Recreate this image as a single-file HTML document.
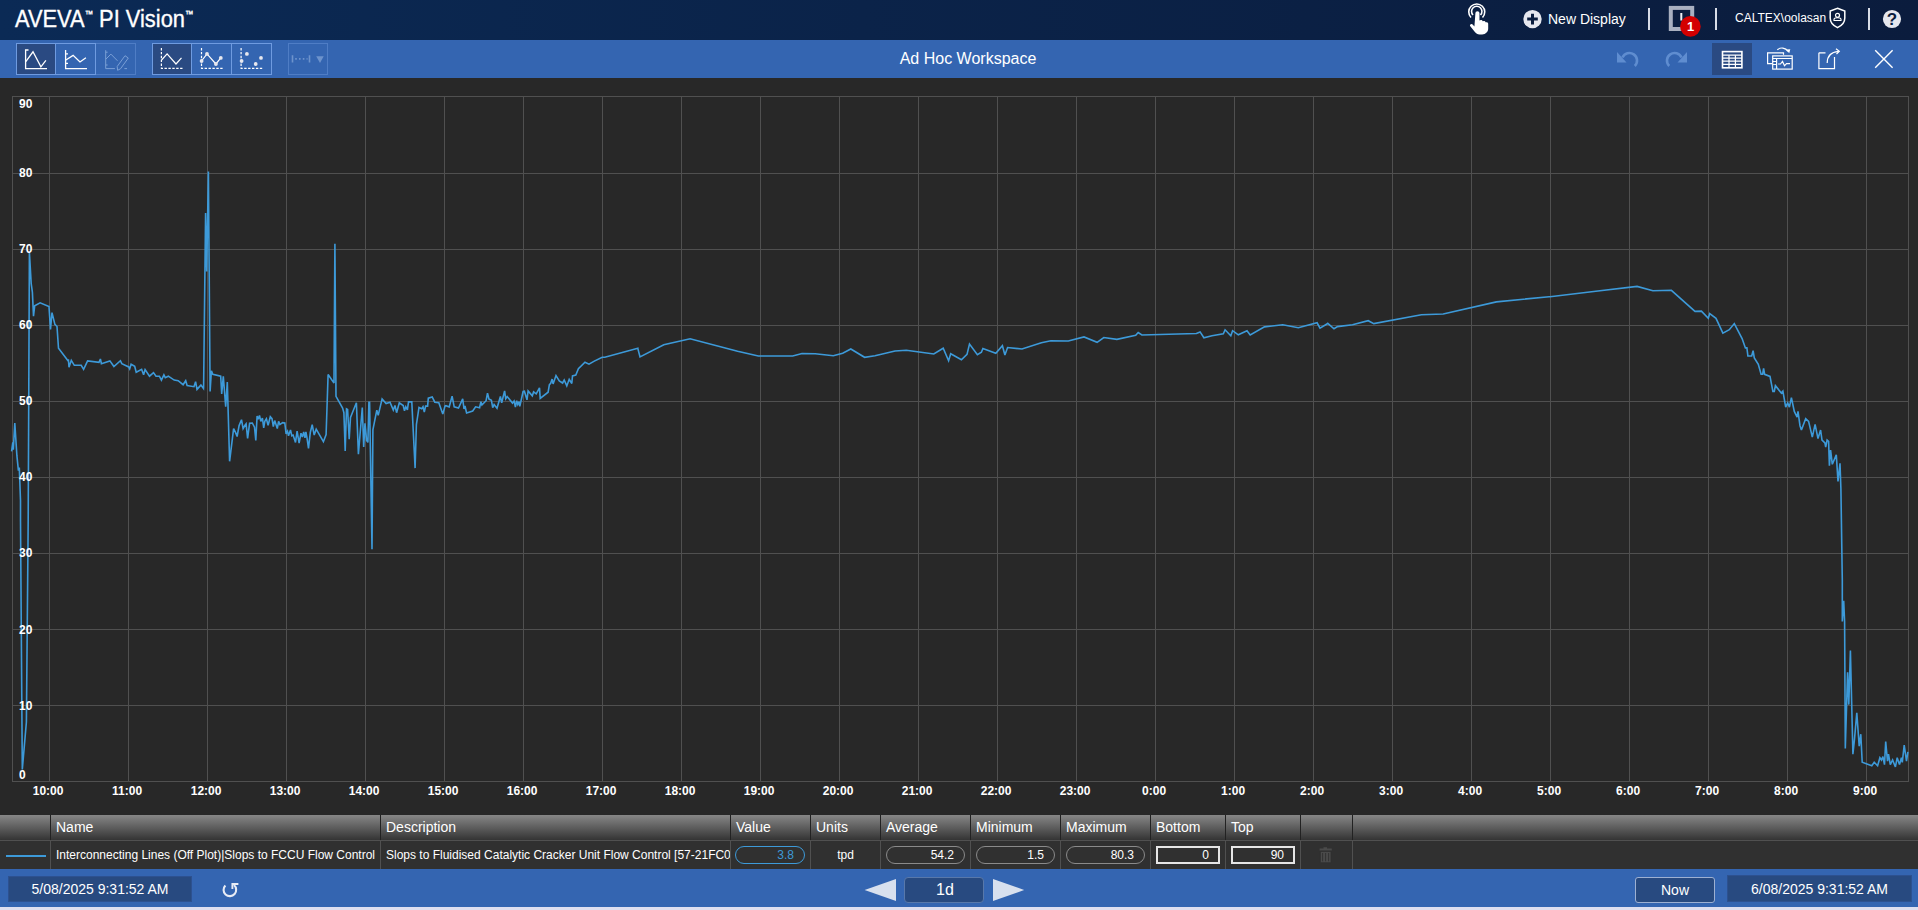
<!DOCTYPE html>
<html><head><meta charset="utf-8">
<style>
*{margin:0;padding:0;box-sizing:border-box}
html,body{width:1918px;height:910px;overflow:hidden;background:#dedff0;font-family:"Liberation Sans",sans-serif;color:#fff}
.a{position:absolute}
#hdr{left:0;top:0;width:1918px;height:40px;background:linear-gradient(90deg,#0b2a55 0%,#0b2349 45%,#0b1c3d 100%)}
#tb{left:0;top:40px;width:1918px;height:38px;background:#3465b1}
#chart{left:0;top:78px;width:1918px;height:737px;background:#282828}
#th{left:0;top:815px;width:1918px;height:25px;background:linear-gradient(#878787,#343434)}
#tr{left:0;top:840px;width:1918px;height:29px;background:#303030;border-top:1px solid #505050}
#bb{left:0;top:869px;width:1918px;height:38px;background:#3465b1}
.btn{position:absolute;top:43px;height:32px;border:1px solid #6f9be0}
.btn.on{background:#2a4a82}
.hc{position:absolute;top:815px;height:25px;font-size:14px;line-height:25px;padding-left:5px;white-space:nowrap}
.sep{position:absolute;width:1px}
.rc{position:absolute;top:841px;height:28px;font-size:12px;line-height:28px;white-space:nowrap;overflow:hidden}
.pill{position:absolute;top:846px;height:18px;border:1px solid #8a8a8a;border-radius:9px;font-size:12px;line-height:16px;text-align:right;padding-right:10px}
.box{position:absolute;top:846px;height:18px;border:2px solid #e6e6e6;font-size:12px;line-height:14px;text-align:right;padding-right:9px}
.yl{position:absolute;left:19px;font-size:12px;font-weight:bold;line-height:14px}
.xl{position:absolute;top:784px;font-size:12px;font-weight:bold;line-height:14px;width:60px;text-align:center}
svg{overflow:visible}
</style></head><body>
<div id="hdr" class="a"></div>
<div class="a" style="left:15px;top:6px;font-size:23.5px;line-height:26px;white-space:nowrap;transform:scaleX(0.93);transform-origin:0 0;-webkit-text-stroke:0.35px #fff">AVEVA<span style="font-size:9px;position:relative;top:-10px;margin-left:0px">™</span> PI Vision<span style="font-size:9px;position:relative;top:-10px;margin-left:0px">™</span></div>

<!-- header right -->
<svg class="a" style="left:1460px;top:0" width="40" height="40" viewBox="0 0 40 40">
  <path d="M11 17.5 A8 8 0 1 1 22.5 17.5" fill="none" stroke="#fff" stroke-width="1.6"/>
  <path d="M13 15 A5.2 5.2 0 1 1 20.5 15" fill="none" stroke="#fff" stroke-width="1.6"/>
  <path transform="translate(9.6 0) scale(1.12 1.02) translate(-9.6 0)" d="M14.8 12.8 a1.8 1.8 0 0 1 3.6 0 V20 l1.2 -0.3 c1.2 0 1.6 0.6 1.7 1.2 l1-0.2 c1 0 1.5 0.6 1.5 1.2 l0.8-0.1 c1 0 1.6 0.7 1.6 1.5 V28 c0 3 -2 5.8 -5.5 5.8 h-2.2 c-2 0 -3 -1 -4 -2.2 l-4.3 -5.8 c-0.6 -0.9 -0.2 -1.9 0.6 -2.1 c0.7 -0.2 1.4 0.1 1.9 0.7 l1.2 1.5 Z" fill="#fff"/>
</svg>
<svg class="a" style="left:1523px;top:10px" width="20" height="20" viewBox="0 0 20 20">
  <circle cx="9.5" cy="9.1" r="9.2" fill="#e6e7ee"/>
  <path d="M9.5 3.8 V14.4 M4.2 9.1 H14.8" stroke="#0b1d3e" stroke-width="3"/>
</svg>
<div class="a" style="left:1548px;top:10px;font-size:14px;line-height:18px">New Display</div>
<div class="a" style="left:1648px;top:8px;width:1.5px;height:22px;background:#d8dce6"></div>
<svg class="a" style="left:1666px;top:4px" width="40" height="36" viewBox="0 0 40 36">
  <rect x="4.8" y="3.9" width="21.4" height="21.1" fill="#0b1d3e" stroke="#a9b0c0" stroke-width="4"/>
  <path d="M12.5 27 l2 -2.2 h-4 z" fill="#a9b0c0"/>
  <rect x="14.3" y="9" width="2" height="7.5" fill="#eef0f6"/>
  <circle cx="24.4" cy="22.4" r="10.3" fill="#d40000"/>
  <text x="24.6" y="27" text-anchor="middle" font-family="Liberation Sans" font-weight="bold" font-size="13" fill="#fff">1</text>
</svg>
<div class="a" style="left:1715px;top:8px;width:1.5px;height:22px;background:#d8dce6"></div>
<div class="a" style="left:1735px;top:11px;font-size:12px;line-height:15px">CALTEX\oolasan</div>
<svg class="a" style="left:1829px;top:7px" width="18" height="22" viewBox="0 0 18 22">
  <path d="M8.5 1.2 L15.8 4 V11 C15.8 15.5 12.5 18.8 8.5 20.6 C4.5 18.8 1.2 15.5 1.2 11 V4 Z" fill="none" stroke="#fff" stroke-width="1.5"/>
  <circle cx="8.5" cy="8.3" r="2" fill="none" stroke="#fff" stroke-width="1.2"/>
  <path d="M5 13.5 H12 V12.3 C12 11.3 11 10.8 8.5 10.8 C6 10.8 5 11.3 5 12.3 Z" fill="none" stroke="#fff" stroke-width="1.1"/>
</svg>
<div class="a" style="left:1868px;top:8px;width:1.5px;height:22px;background:#d8dce6"></div>
<svg class="a" style="left:1882px;top:9px" width="20" height="20" viewBox="0 0 20 20">
  <circle cx="10" cy="10" r="9.1" fill="#e6e7ee"/>
  <text x="10" y="16" text-anchor="middle" font-family="Liberation Sans" font-weight="bold" font-size="17" fill="#0b1d3e">?</text>
</svg>

<div id="tb" class="a"></div>
<div class="btn on" style="left:16px;width:40px"></div>
<div class="btn" style="left:55px;width:41px"></div>
<div class="btn" style="left:95px;width:41px;border-color:#4f7dc5"></div>
<div class="btn" style="left:55px;width:41px"></div>
<div class="btn on" style="left:152px;width:40px"></div>
<div class="btn" style="left:191px;width:41px"></div>
<div class="btn" style="left:231px;width:41px"></div>
<div class="btn" style="left:288px;width:40px;border-color:#4f7dc5"></div>
<svg class="a" style="left:0;top:40px" width="340" height="38" viewBox="0 40 340 38">
  <g fill="none" stroke="#fff" stroke-width="1.3">
    <path d="M28.5 50 H25.6 V68.6 H47"/>
    <path d="M25.8 61.7 L33 51.8 L40.9 66.9 L45.9 60.4"/>
    <path d="M65.6 50 V68.6 H87 M65.6 53.8 H68 M65.6 63.3 H68"/>
    <path d="M65.9 60 L73.1 55.4 L80 62 L85.9 57.7"/>
  </g>
  <g fill="none" stroke="#7a9fd6" stroke-width="1">
    <path d="M105.7 50.2 V68.6 H114.9 M124.4 68.6 H127 M105.7 52.2 H107.6 M105.7 65 H107.6"/>
    <path d="M106 59 L110.9 54.1 L117.5 60.8"/>
    <path d="M117.2 66.5 L125 55.7 L128.3 58 L120.5 68.8 L117.6 70.3 Z"/>
  </g>
  <g fill="none" stroke="#fff" stroke-width="1.2" stroke-dasharray="2.4 1.5">
    <path d="M161.4 48 V68.3 H183.5"/>
    <path d="M201.5 48 V68.3 H223.5"/>
    <path d="M241.1 48 V68.3 H263"/>
  </g>
  <g fill="none" stroke="#fff" stroke-width="1.2">
    <path d="M161.6 60 L167.1 53.9 L176 64 L181.5 57.9"/>
    <path d="M201.5 61 L207 53.9 L215.9 64 L220.8 57.9"/>
  </g>
  <g fill="#e8e8ee">
    <circle cx="201.6" cy="61" r="1.9"/><circle cx="207" cy="53.9" r="1.9"/><circle cx="215.9" cy="64" r="1.9"/><circle cx="220.8" cy="57.9" r="1.9"/>
    <circle cx="241.6" cy="61" r="1.9"/><circle cx="246.9" cy="53.9" r="1.9"/><circle cx="255.7" cy="64" r="1.9"/><circle cx="261" cy="57.9" r="1.9"/>
  </g>
  <g fill="none" stroke="#6d93cc" stroke-width="1.6">
    <path d="M292.5 55.3 V62.6 M309.5 55.3 V62.6"/>
    <path d="M295.2 58.9 H307.5" stroke-dasharray="1.6 2.2"/>
  </g>
  <path d="M316.2 56.3 H323.7 L320 62.9 Z" fill="#6d93cc"/>
</svg>
<div class="a" style="left:0;top:49px;width:1936px;text-align:center;font-size:16px;line-height:20px">Ad Hoc Workspace</div>
<div class="a" style="left:1712px;top:43px;width:40px;height:32px;background:#2a4a82"></div>
<svg class="a" style="left:1600px;top:40px" width="318" height="38" viewBox="1600 40 318 38">
  <g fill="none" stroke="#5f8dd0" stroke-width="2.6">
    <path d="M1622.5 57.5 A7.6 7.6 0 1 1 1634.8 66"/>
    <path d="M1681.5 57.5 A7.6 7.6 0 1 0 1669.2 66"/>
  </g>
  <path d="M1617 52 V62.5 H1626.5 Z" fill="#5f8dd0"/>
  <path d="M1687 52 V62.5 H1677.5 Z" fill="#5f8dd0"/>
  <rect x="1722.5" y="51.6" width="19.4" height="16.2" fill="none" stroke="#fff" stroke-width="1.6"/>
  <path d="M1722.5 55.2 H1742 M1722.5 58.2 H1742 M1722.5 61.2 H1742 M1722.5 64.4 H1742" stroke="#fff" stroke-width="1.2"/>
  <path d="M1729 55.2 V68 M1735.4 55.2 V68" stroke="#fff" stroke-width="1.2"/>
  <g fill="none" stroke="#fff" stroke-width="1.2">
    <path d="M1783.5 54.8 V52.9 H1767.6 V63.6 H1772"/>
    <rect x="1772.7" y="55.9" width="19.5" height="13.2"/>
    <path d="M1772.7 58.5 H1792.2 M1776.6 58.5 V69 M1772.7 61.5 H1776.6 M1772.7 64.5 H1776.6"/>
    <path d="M1778 64 H1780.5 L1782.5 61.5 L1784.5 65.8 L1786.5 63.6 H1790"/>
    <path d="M1777.3 49.8 C1780.5 47 1785.5 47.5 1788 51.3"/>
    <path d="M1818.9 52.8 H1825.5 M1834.5 57 V68.7 H1818.9 V52.8"/>
    <path d="M1827.2 62.9 C1827.2 56 1831 52 1838.5 51.3"/>
    <path d="M1836 48.8 L1839.3 51.3 L1836.5 54"/>
    <path d="M1875.2 50.2 L1892.6 67.7 M1892.6 50.2 L1875.2 67.7" stroke-width="1.4"/>
  </g>
  <path d="M1786 49.5 L1789.2 53.2 L1790.3 49.3 Z" fill="#fff"/>
</svg>

<div id="chart" class="a"></div>
<svg class="a" style="left:0;top:0" width="1918" height="815" viewBox="0 0 1918 815">
<line x1="12.3" y1="173.5" x2="1908.2" y2="173.5" stroke="#505050" stroke-width="1"/>
<line x1="12.3" y1="249.5" x2="1908.2" y2="249.5" stroke="#505050" stroke-width="1"/>
<line x1="12.3" y1="325.5" x2="1908.2" y2="325.5" stroke="#505050" stroke-width="1"/>
<line x1="12.3" y1="401.5" x2="1908.2" y2="401.5" stroke="#505050" stroke-width="1"/>
<line x1="12.3" y1="477.5" x2="1908.2" y2="477.5" stroke="#505050" stroke-width="1"/>
<line x1="12.3" y1="553.5" x2="1908.2" y2="553.5" stroke="#505050" stroke-width="1"/>
<line x1="12.3" y1="629.5" x2="1908.2" y2="629.5" stroke="#505050" stroke-width="1"/>
<line x1="12.3" y1="705.5" x2="1908.2" y2="705.5" stroke="#505050" stroke-width="1"/>
<line x1="49.5" y1="96.5" x2="49.5" y2="781.3" stroke="#505050" stroke-width="1"/>
<line x1="128.5" y1="96.5" x2="128.5" y2="781.3" stroke="#505050" stroke-width="1"/>
<line x1="207.5" y1="96.5" x2="207.5" y2="781.3" stroke="#505050" stroke-width="1"/>
<line x1="286.5" y1="96.5" x2="286.5" y2="781.3" stroke="#505050" stroke-width="1"/>
<line x1="365.5" y1="96.5" x2="365.5" y2="781.3" stroke="#505050" stroke-width="1"/>
<line x1="444.5" y1="96.5" x2="444.5" y2="781.3" stroke="#505050" stroke-width="1"/>
<line x1="523.5" y1="96.5" x2="523.5" y2="781.3" stroke="#505050" stroke-width="1"/>
<line x1="602.5" y1="96.5" x2="602.5" y2="781.3" stroke="#505050" stroke-width="1"/>
<line x1="681.5" y1="96.5" x2="681.5" y2="781.3" stroke="#505050" stroke-width="1"/>
<line x1="760.5" y1="96.5" x2="760.5" y2="781.3" stroke="#505050" stroke-width="1"/>
<line x1="839.5" y1="96.5" x2="839.5" y2="781.3" stroke="#505050" stroke-width="1"/>
<line x1="918.5" y1="96.5" x2="918.5" y2="781.3" stroke="#505050" stroke-width="1"/>
<line x1="997.5" y1="96.5" x2="997.5" y2="781.3" stroke="#505050" stroke-width="1"/>
<line x1="1076.5" y1="96.5" x2="1076.5" y2="781.3" stroke="#505050" stroke-width="1"/>
<line x1="1155.5" y1="96.5" x2="1155.5" y2="781.3" stroke="#505050" stroke-width="1"/>
<line x1="1234.5" y1="96.5" x2="1234.5" y2="781.3" stroke="#505050" stroke-width="1"/>
<line x1="1313.5" y1="96.5" x2="1313.5" y2="781.3" stroke="#505050" stroke-width="1"/>
<line x1="1392.5" y1="96.5" x2="1392.5" y2="781.3" stroke="#505050" stroke-width="1"/>
<line x1="1471.5" y1="96.5" x2="1471.5" y2="781.3" stroke="#505050" stroke-width="1"/>
<line x1="1550.5" y1="96.5" x2="1550.5" y2="781.3" stroke="#505050" stroke-width="1"/>
<line x1="1629.5" y1="96.5" x2="1629.5" y2="781.3" stroke="#505050" stroke-width="1"/>
<line x1="1708.5" y1="96.5" x2="1708.5" y2="781.3" stroke="#505050" stroke-width="1"/>
<line x1="1787.5" y1="96.5" x2="1787.5" y2="781.3" stroke="#505050" stroke-width="1"/>
<line x1="1866.5" y1="96.5" x2="1866.5" y2="781.3" stroke="#505050" stroke-width="1"/>
<rect x="12.5" y="96.5" width="1896" height="685" fill="none" stroke="#505050" stroke-width="1"/>
<path d="M11.6 451.3 L12.8 442.4 L13.3 449.8 L14.8 423.1 L16.9 455.7 L18.4 470.6 L19.3 467.6 L20.5 500.3 L20.5 520 L22.3 769.5 L26.4 722 L28.2 520 L29.4 252.3 L31.2 283.5 L32.4 292.4 L33.5 316.1 L34.7 305.7 L40.1 302.8 L49 306.6 L50.5 329.5 L52 312.6 L54.9 324.4 L57 326.5 L58.5 348.2 L68 360.7 L68.4 359.4 L69 367.3 L71.3 360.3 L74.3 365.3 L81.2 365.3 L83.6 369.3 L87.6 360.9 L99 362.3 L100.4 359 L101.4 363.7 L109.9 360.9 L113.9 366.5 L120.4 360.7 L121.8 363.7 L128.7 366.9 L129.7 368.9 L131.1 364.3 L134.7 366.3 L136.2 372.2 L141.6 369.3 L143.6 374.8 L145.1 369.6 L149.5 376.2 L153.5 372.6 L156 376.2 L159.4 376.2 L161.4 380.1 L163.9 374.8 L165.3 377.6 L168.3 376.2 L174.2 380.1 L178.2 380.7 L183.1 384.7 L185.7 380.7 L187.1 385.5 L194 386.7 L195.6 381.7 L197 389.4 L200.9 385.1 L203.5 388.6 L203.6 387.1 L205.6 212.9 L206.7 271.4 L208.4 171.4 L210.1 391.4 L211.4 370.8 L212.8 374.2 L220.7 376.2 L221.7 394 L223.3 376.2 L225.7 406.8 L227.3 382.1 L229.6 461.3 L233.6 428.6 L235.6 432.6 L237.1 436.5 L239.1 425.6 L241.5 419.7 L243.1 428.6 L245 425.3 L246.1 423.9 L247.6 438.4 L249.6 423.3 L252.3 423 L254.5 427.2 L255.8 440.4 L257.1 416 L258.2 419.3 L259.5 415.4 L260.8 421.3 L262.4 418 L263.7 427.9 L264.8 421.3 L266.4 418.7 L268.1 425.3 L270.3 416.7 L272 418.7 L273.3 426.6 L274.7 420.6 L277.3 428.6 L278.6 421.3 L279.9 424.6 L282.6 422.6 L284.8 423 L286.1 433.8 L287.5 431.2 L288.5 435.8 L290.5 429.9 L291.8 435.8 L293.1 435.1 L295.5 442.4 L297.1 431.2 L299.1 443.1 L301 433.2 L302.4 437.1 L303.7 431.9 L305 437.8 L305.9 431.9 L307 437.8 L308.5 448.3 L310.3 432.5 L312.2 424.6 L314.2 435.1 L316.2 429.2 L323.4 441.7 L326.1 434.5 L328.1 374.5 L334 383.1 L334.9 243.8 L336 396.3 L342.6 408.1 L343.9 412.7 L345.2 451 L346.5 408.8 L347.6 409.4 L349.2 439.1 L350.5 417.4 L356.4 402.8 L358.4 454.3 L362.3 407.5 L363.7 447 L365 423.3 L366.6 440.4 L367.9 442.4 L368.9 402.2 L369.6 402.2 L372 549.2 L372.9 429.9 L376.8 410.1 L378.2 415.4 L382.1 398.9 L386.1 403.5 L390 402.2 L393.3 410.1 L395 405.5 L396.6 412.7 L399.3 402.8 L403.2 405.5 L404.5 410.8 L405.8 406.8 L407.4 409.8 L408.5 401.9 L411.8 401.9 L415.1 468.1 L416.4 424.6 L419 407.5 L421.7 408.8 L423 406.8 L424.3 412.1 L425.6 406.1 L427.6 406.1 L428.3 398.2 L432.2 396.9 L434.8 402.2 L438.8 402.8 L442.8 414.1 L445 406.1 L445.9 405.7 L449.2 407 L452.1 396.2 L454.2 406.8 L458.5 408.1 L462.7 398.8 L464 409 L465 406 L466.6 412.9 L472.7 411 L475.6 406.8 L479.6 407.7 L480.9 401.7 L481.9 405 L486.1 400.7 L487.5 393.2 L489 399.1 L491.4 400.2 L492.7 407.7 L494.1 404.6 L497 408.3 L500.4 396.5 L501.7 402.8 L504.6 390.9 L505.7 398.8 L507.2 396.5 L512.5 403.1 L514.1 401.1 L515.4 407 L516.7 400.7 L517.8 404.4 L519.1 401.5 L519.8 406.4 L523.1 391.5 L524.4 391.2 L527 399.8 L528.1 390.9 L532.3 395.8 L533.6 391.9 L536.2 393.8 L539.5 387.9 L540.2 398.4 L548.1 392.2 L549.4 384.6 L550.7 383.3 L552.1 379.1 L553.1 383.9 L556 375.6 L559.3 380.9 L562.6 383 L564.2 380 L566.8 385.9 L569.2 379.3 L571.8 383.5 L572.5 376 L575.8 375.1 L578.4 368.8 L585 362.2 L589 364.2 L594.3 361.1 L602.2 357.2 L604.8 357.2 L637.8 348.3 L637.8 348.5 L640 356.9 L663.8 344.8 L690.1 338.8 L737.6 351.3 L758.3 356 L792.7 356 L802 353.5 L815.2 353.8 L833.3 355.7 L842.7 353.2 L850.8 349 L864.6 357.3 L875 355.7 L895 351 L906.3 350.3 L933.8 354 L943.2 348.2 L948.6 360.7 L950.7 353.8 L961.4 359.8 L967 354.4 L969.5 344 L977.4 354.8 L981.4 352.3 L982.9 348.5 L995.8 353.2 L1002.4 345.7 L1004.9 355 L1007.6 347.5 L1022 349 L1041.4 342.8 L1050.8 340.7 L1068.3 341 L1084 336.9 L1097.1 342.3 L1097.1 342.3 L1103.8 337.5 L1116.9 339.4 L1135.7 335.3 L1138.2 332.5 L1141.9 335 L1196.4 333.5 L1200.1 331.9 L1203.9 337.8 L1212 335.7 L1223.3 333.8 L1225.1 329.8 L1230.8 335.7 L1232.6 330.7 L1238.3 334.8 L1247 330.7 L1250.2 335 L1264.5 326.9 L1282.7 324.8 L1298.3 327.8 L1317.1 322.8 L1320 328.2 L1327.7 323.5 L1327.8 323.4 L1334 328.8 L1337.5 326.6 L1352.5 324.8 L1368.2 320.7 L1373.8 323.6 L1421.4 314.8 L1443.2 314 L1496.4 301.9 L1549 296.7 L1550 296.7 L1600 290.7 L1637.1 286.4 L1652.9 290.7 L1671.4 290.3 L1695 311.4 L1701.4 311.1 L1708.3 318.3 L1709.7 313.6 L1716 318.3 L1722.9 333.1 L1729.3 329.7 L1734.3 323.6 L1742.1 338.6 L1745.4 347.9 L1746.9 347.9 L1747.9 356 L1751.7 356 L1753.1 350.7 L1754.3 357.9 L1758.3 364.3 L1761.1 374.3 L1762.6 374.3 L1763.6 368.3 L1764.6 374.3 L1770 376.4 L1772.9 391.4 L1774.3 391.4 L1775.4 385.7 L1781.4 393.1 L1782.9 391.1 L1785.7 407.1 L1787.7 402.9 L1789.4 407.1 L1791.4 397.7 L1794.3 411.4 L1797.1 417.1 L1798 411.4 L1800 425.7 L1801.4 430 L1805.7 418.6 L1808.6 421.4 L1812.3 437.1 L1815.1 424.3 L1818 438.6 L1820.6 430 L1822 440 L1824.9 442.9 L1825.7 447.1 L1827.1 440 L1828.6 441.4 L1829.4 465.7 L1830.6 450 L1832.3 464.3 L1836.3 454.9 L1838 481.4 L1840 463.4 L1840.9 488.6 L1842.3 580 L1842.3 621.5 L1843.7 600.8 L1844.6 621.5 L1845.3 748.5 L1847.6 672.3 L1848.8 704.6 L1850.4 650.4 L1852.9 754.2 L1854.5 739.2 L1856.8 712.7 L1859.2 746.2 L1860.8 734.2 L1862.2 762.3 L1871.8 765.8 L1874.2 762.3 L1877.6 765.8 L1879.9 757.7 L1881.5 760 L1882.9 756.6 L1884.5 764.6 L1885.7 741.6 L1887.5 761.2 L1888.5 754.2 L1890.3 764.6 L1892.6 760 L1895.4 766.9 L1897.2 757.7 L1899.5 764.6 L1901.4 757.7 L1902.3 762.3 L1904.2 745 L1906.5 761.2 L1907.9 751.9" fill="none" stroke="#3d9ad9" stroke-width="1.6" stroke-linejoin="miter" stroke-miterlimit="3"/>
</svg>
<div class="yl" style="top:97.0px">90</div>
<div class="yl" style="top:166.0px">80</div>
<div class="yl" style="top:242.1px">70</div>
<div class="yl" style="top:318.2px">60</div>
<div class="yl" style="top:394.3px">50</div>
<div class="yl" style="top:470.3px">40</div>
<div class="yl" style="top:546.4px">30</div>
<div class="yl" style="top:622.5px">20</div>
<div class="yl" style="top:698.6px">10</div>
<div class="yl" style="top:768.2px">0</div>
<div class="xl" style="left:18.1px">10:00</div>
<div class="xl" style="left:97.1px">11:00</div>
<div class="xl" style="left:176.1px">12:00</div>
<div class="xl" style="left:255.1px">13:00</div>
<div class="xl" style="left:334.1px">14:00</div>
<div class="xl" style="left:413.1px">15:00</div>
<div class="xl" style="left:492.1px">16:00</div>
<div class="xl" style="left:571.1px">17:00</div>
<div class="xl" style="left:650.1px">18:00</div>
<div class="xl" style="left:729.1px">19:00</div>
<div class="xl" style="left:808.1px">20:00</div>
<div class="xl" style="left:887.1px">21:00</div>
<div class="xl" style="left:966.1px">22:00</div>
<div class="xl" style="left:1045.1px">23:00</div>
<div class="xl" style="left:1124.1px">0:00</div>
<div class="xl" style="left:1203.1px">1:00</div>
<div class="xl" style="left:1282.1px">2:00</div>
<div class="xl" style="left:1361.1px">3:00</div>
<div class="xl" style="left:1440.1px">4:00</div>
<div class="xl" style="left:1519.1px">5:00</div>
<div class="xl" style="left:1598.1px">6:00</div>
<div class="xl" style="left:1677.1px">7:00</div>
<div class="xl" style="left:1756.1px">8:00</div>
<div class="xl" style="left:1835.1px">9:00</div>

<div id="th" class="a"></div>
<div id="tr" class="a"></div>
<div class="sep" style="left:50px;top:815px;height:25px;background:#222"></div>
<div class="sep" style="left:380px;top:815px;height:25px;background:#222"></div>
<div class="sep" style="left:730px;top:815px;height:25px;background:#222"></div>
<div class="sep" style="left:810px;top:815px;height:25px;background:#222"></div>
<div class="sep" style="left:880px;top:815px;height:25px;background:#222"></div>
<div class="sep" style="left:970px;top:815px;height:25px;background:#222"></div>
<div class="sep" style="left:1060px;top:815px;height:25px;background:#222"></div>
<div class="sep" style="left:1150px;top:815px;height:25px;background:#222"></div>
<div class="sep" style="left:1225px;top:815px;height:25px;background:#222"></div>
<div class="sep" style="left:1300px;top:815px;height:25px;background:#222"></div>
<div class="sep" style="left:1352px;top:815px;height:25px;background:#222"></div>
<div class="sep" style="left:50px;top:841px;height:28px;background:#505050"></div>
<div class="sep" style="left:380px;top:841px;height:28px;background:#505050"></div>
<div class="sep" style="left:730px;top:841px;height:28px;background:#505050"></div>
<div class="sep" style="left:810px;top:841px;height:28px;background:#505050"></div>
<div class="sep" style="left:880px;top:841px;height:28px;background:#505050"></div>
<div class="sep" style="left:970px;top:841px;height:28px;background:#505050"></div>
<div class="sep" style="left:1060px;top:841px;height:28px;background:#505050"></div>
<div class="sep" style="left:1150px;top:841px;height:28px;background:#505050"></div>
<div class="sep" style="left:1225px;top:841px;height:28px;background:#505050"></div>
<div class="sep" style="left:1300px;top:841px;height:28px;background:#505050"></div>
<div class="sep" style="left:1352px;top:841px;height:28px;background:#505050"></div>
<div class="hc" style="left:51px">Name</div>
<div class="hc" style="left:381px">Description</div>
<div class="hc" style="left:731px">Value</div>
<div class="hc" style="left:811px">Units</div>
<div class="hc" style="left:881px">Average</div>
<div class="hc" style="left:971px">Minimum</div>
<div class="hc" style="left:1061px">Maximum</div>
<div class="hc" style="left:1151px">Bottom</div>
<div class="hc" style="left:1226px">Top</div>
<div class="a" style="left:6px;top:855px;width:40px;height:2px;background:#3d9ad9"></div>
<div class="rc" style="left:56px;width:322px">Interconnecting Lines (Off Plot)|Slops to FCCU Flow Control</div>
<div class="rc" style="left:386px;width:344px">Slops to Fluidised Catalytic Cracker Unit Flow Control [57-21FC0</div>
<div class="pill" style="left:735px;width:70px;border-color:#3d9ad9;color:#3d9ad9">3.8</div>
<div class="rc" style="left:811px;width:69px;text-align:center">tpd</div>
<div class="pill" style="left:886px;width:79px">54.2</div>
<div class="pill" style="left:976px;width:79px">1.5</div>
<div class="pill" style="left:1066px;width:79px">80.3</div>
<div class="box" style="left:1156px;width:64px">0</div>
<div class="box" style="left:1231px;width:64px">90</div>
<svg class="a" style="left:1318px;top:846px" width="16" height="18" viewBox="0 0 16 18">
  <path d="M5.5 1.2 H9 V2.4 H13.8 V4.6 H1.6 V2.4 H5.5 Z" fill="#4a4a4a"/>
  <path d="M2.3 5.4 H13 V16.8 H2.3 Z M4.6 7 V15.3 M7.6 7 V15.3 M10.6 7 V15.3" fill="#4a4a4a" stroke="#303030" stroke-width="0.9"/>
</svg>

<div id="bb" class="a"></div>
<div class="a" style="left:8px;top:876px;width:184px;height:26px;background:#284a80;border:1px solid #2d5190"></div>
<div class="a" style="left:8px;top:879px;width:184px;text-align:center;font-size:14px;line-height:20px">5/08/2025 9:31:52 AM</div>
<svg class="a" style="left:210px;top:874px" width="40" height="30" viewBox="210 874 40 30">
  <path d="M225.4 885.4 A6.3 6.3 0 1 0 233.9 885" fill="none" stroke="#e8ecf5" stroke-width="2.1"/>
  <path d="M232.4 888.9 V884 H238.4" fill="none" stroke="#e8ecf5" stroke-width="1.9"/>
</svg>
<svg class="a" style="left:860px;top:876px" width="170" height="30" viewBox="860 876 170 30">
  <path d="M864.6 890 L896 879 V901 Z" fill="#d8e0ee"/>
  <path d="M993 879 V901 L1024.2 890 Z" fill="#d8e0ee"/>
</svg>
<div class="a" style="left:904px;top:877px;width:80px;height:26px;background:#284a80;border:1px solid #5878aa;border-radius:4px;text-align:center;font-size:16px;line-height:24px;padding-left:2px">1d</div>
<div class="a" style="left:1635px;top:877px;width:80px;height:26px;background:#284a80;border:1px solid #9db0d2;border-radius:3px;text-align:center;font-size:14px;line-height:24px">Now</div>
<div class="a" style="left:1727px;top:875px;width:185px;height:27px;background:#284a80;border:1px solid #2d5190;text-align:center;font-size:14px;line-height:27px">6/08/2025 9:31:52 AM</div>
</body></html>
